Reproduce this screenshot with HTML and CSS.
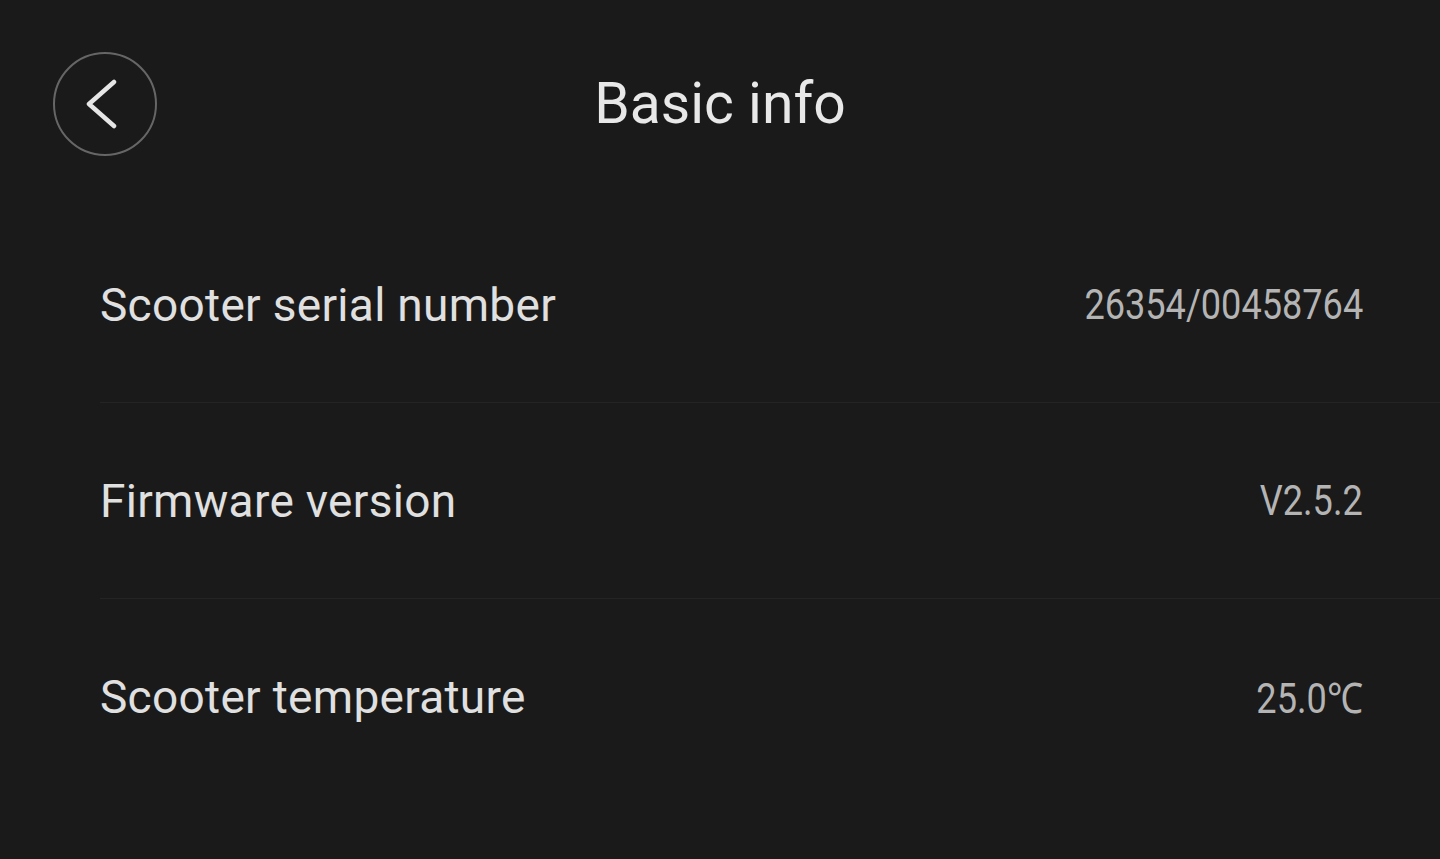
FILE: index.html
```html
<!DOCTYPE html>
<html>
    <head>
        <meta charset="utf-8" />
        <title>Basic info</title>
        <link rel="stylesheet" href="styles.css">
    </head>
    <body>
        <div class="page">
            <div class="hd">
                <a class="back" href="#">
                    <svg width="32" height="50" viewBox="0 0 32 50">
                        <path d="M29 3 L4 25 L29 47" fill="none" stroke="#e6e6e6" stroke-width="4.5" stroke-linecap="round" stroke-linejoin="round" />
                    </svg>
                </a>
                <h1 class="title">Basic info</h1>
                <span></span>
            </div>
            <ul class="list">
                <li>
                    <span class="label">Scooter serial number</span>
                    <span class="value">26354/00458764</span>
                </li>
                <li>
                    <span class="label">Firmware version</span>
                    <span class="value">V2.5.2</span>
                </li>
                <li>
                    <span class="label">Scooter temperature</span>
                    <span class="value">25.0℃</span>
                </li>
            </ul>
        </div>
    </body>
</html>
```

FILE: styles.css
```css
* {
    margin: 0;
    padding: 0;
}
html, body {
    height: 100%;
    background: #1a1a1a;
}
body {
    font-family: Roboto, "Liberation Sans", sans-serif;
    color: #e6e6e6;
}
li {
    list-style: none;
}

.hd {
    display: grid;
    grid-template-columns: 1fr auto 1fr;
    align-items: center;
    height: 156px;
    padding: 51px 0 0 53px;
    box-sizing: border-box;
}
.hd .back {
    display: flex;
    align-items: center;
    justify-content: center;
    width: 104px;
    height: 104px;
    box-sizing: border-box;
    border: 2px solid #666;
    border-radius: 50%;
    padding-right: 8px;
}
.hd .title {
    margin-left: -53px;
    font-size: 57px;
    font-weight: 400;
    color: #e8e8e8;
    line-height: 104px;
}

.list {
    margin: 51px 0 0 100px;
}
.list li {
    display: flex;
    align-items: center;
    justify-content: space-between;
    height: 195px;
    padding-right: 77px;
    border-bottom: 1px solid #242424;
}
.list li:last-child {
    border-bottom: none;
}
.list .label {
    font-size: 46px;
    letter-spacing: 0.3px;
    color: #e0e0e0;
}
.list .value {
    display: inline-block;
    font-size: 42px;
    color: #b4b4b4;
    transform: scaleX(0.86);
    transform-origin: right center;
}
```
